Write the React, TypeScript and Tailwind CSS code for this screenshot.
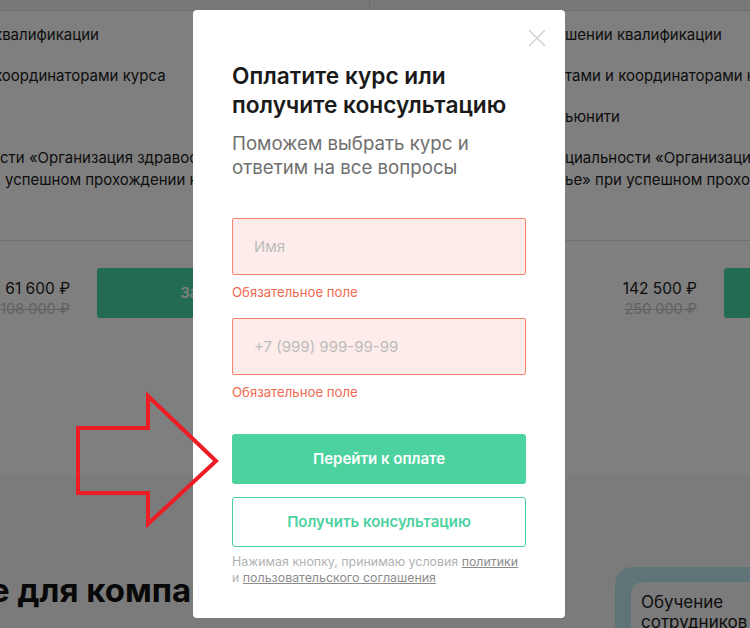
import React from "react";

const LEFT_LINES = [
  { text: "квалификации", cls: "ml-[-6px]" },
  { text: "координаторами курса", cls: "ml-[-6px]" },
  { text: "", cls: "" },
];

function PriceRow({ price, old, priceW }: { price: string; old: string; priceW: string }) {
  return (
    <div className="flex items-start border-t border-[#e0e0e0] pt-[27px]">
      <div className={`${priceW} mt-[10px] shrink-0 text-right`}>
        <p className="text-[15.5px] leading-[22px] text-[#1a1a1a]">{price}</p>
        <p className="text-[14.5px] leading-[18px] text-[#c4c4c4] line-through">{old}</p>
      </div>
      <button className="ml-[27px] h-[50px] w-[254px] shrink-0 rounded-[3px] bg-[#46d6a4] text-[15px] font-semibold text-white">
        Записаться
      </button>
    </div>
  );
}

export default function App() {
  return (
    <div className="relative h-[628px] w-[750px] overflow-hidden bg-[#f6f6f6] font-['Inter','Liberation_Sans',sans-serif]">
      {/* top strip */}
      <div className="flex h-[11px] border-b border-[#e2e2e2] bg-[#f0f0f0]">
        <div className="w-[370px] border-r border-[#d6d6d6]" />
      </div>

      {/* course cards */}
      <div className="flex h-[464px] overflow-hidden">
        <div className="w-[371px] shrink-0 bg-white pt-[13px]">
          <div className="flex flex-col gap-[19px] text-[15px] leading-[22px] text-[#1a1a1a]">
            {LEFT_LINES.map((l, i) => (
              <p key={i} className={`h-[22px] whitespace-nowrap ${l.cls}`}>{l.text}</p>
            ))}
            <div className="whitespace-nowrap">
              <p>сти «Организация здравоохранения и общественное</p>
              <p className="pl-[5px]">успешном прохождении курса</p>
            </div>
          </div>
          <div className="mt-[49px]">
            <PriceRow price="61 600 ₽" old="108 000 ₽" priceW="w-[70px]" />
          </div>
        </div>

        <div className="w-[379px] shrink-0 overflow-hidden bg-white pt-[13px]">
          <div className="flex flex-col gap-[19px] pl-[194px] text-[15px] leading-[22px] text-[#1a1a1a]">
            <p className="whitespace-nowrap">шении квалификации</p>
            <p className="whitespace-nowrap">тами и координаторами курса</p>
            <p className="whitespace-nowrap">ьюнити</p>
            <div className="whitespace-nowrap">
              <p>циальности «Организация здравоохранения</p>
              <p>ье» при успешном прохождении курса</p>
            </div>
          </div>
          <div className="mt-[49px]">
            <PriceRow price="142 500 ₽" old="250 000 ₽" priceW="w-[326px]" />
          </div>
        </div>
      </div>

      {/* next section */}
      <div className="flex items-start justify-between pt-[92px]">
        <h2 className="ml-[-10px] mt-[4px] whitespace-nowrap text-[33px] font-bold leading-[38px] text-[#111]">
          е для компаний
        </h2>
        <div className="w-[135px] shrink-0 rounded-l-[18px] bg-[#bfe9ee] pl-[16px] pt-[15px]">
          <div className="h-[60px] rounded-l-[12px] bg-[#f6f6f6] pl-[10px] pt-[10px] text-[17px] leading-[20px] text-[#1a1a1a]">
            <p>Обучение</p>
            <p>сотрудников</p>
          </div>
        </div>
      </div>

      {/* overlay */}
      <div className="absolute inset-0 bg-black/50" />

      {/* modal */}
      <div className="absolute left-[193px] top-[10px] h-[608px] w-[372px] rounded-[4px] bg-white pl-[39px] pt-[51px]">
        <button className="absolute right-[19px] top-[19px] h-[18px] w-[18px] text-[#cfcfcf]">
          <svg viewBox="0 0 18 18" className="h-full w-full" fill="none" stroke="currentColor" strokeWidth="1.4">
            <path d="M1 1L17 17M17 1L1 17" />
          </svg>
        </button>

        <h3 className="text-[22.7px] font-semibold leading-[29px] text-[#1a1a1a]">
          Оплатите курс или
          <br />
          получите консультацию
        </h3>
        <p className="mt-[13px] text-[18.7px] leading-[24px] text-[#6f6f6f]">
          Поможем выбрать курс и
          <br />
          ответим на все вопросы
        </p>

        <div className="mt-[38px] w-[294px]">
          <input
            placeholder="Имя"
            className="h-[57px] w-full rounded-[2px] border border-[#f3826e] bg-[#fdecea] pl-[21px] text-[15px] outline-none placeholder:text-[#bcbcbc]"
          />
          <p className="mt-[8px] text-[13.2px] leading-[18px] text-[#f26a50]">Обязательное поле</p>

          <input
            placeholder="+7 (999) 999-99-99"
            className="mt-[17px] h-[57px] w-full rounded-[2px] border border-[#f3826e] bg-[#fdecea] pl-[21px] text-[15px] outline-none placeholder:text-[#bcbcbc]"
          />
          <p className="mt-[8px] text-[13.2px] leading-[18px] text-[#f26a50]">Обязательное поле</p>

          <button className="mt-[33px] h-[50px] w-full rounded-[3px] bg-[#4bd29f] text-[15px] font-semibold text-white">
            Перейти к оплате
          </button>
          <button className="mt-[13px] h-[50px] w-full rounded-[3px] border border-[#4bd29f] bg-white text-[15px] font-semibold text-[#4bd29f]">
            Получить консультацию
          </button>

          <p className="mt-[7px] text-[12.4px] leading-[16px] text-[#b2b2b2]">
            Нажимая кнопку, принимаю условия{" "}
            <a className="text-[#8c8c8c] underline">политики</a>
            <br />
            и <a className="text-[#8c8c8c] underline">пользовательского соглашения</a>
          </p>
        </div>
      </div>

      {/* red arrow */}
      <svg className="pointer-events-none absolute inset-0" width="750" height="628" fill="none">
        <polygon
          points="78,428 148,428 148,396 216,461 148,524 148,493 78,493"
          stroke="#ee1c25"
          strokeWidth="4"
          strokeLinejoin="miter"
        />
      </svg>
    </div>
  );
}
